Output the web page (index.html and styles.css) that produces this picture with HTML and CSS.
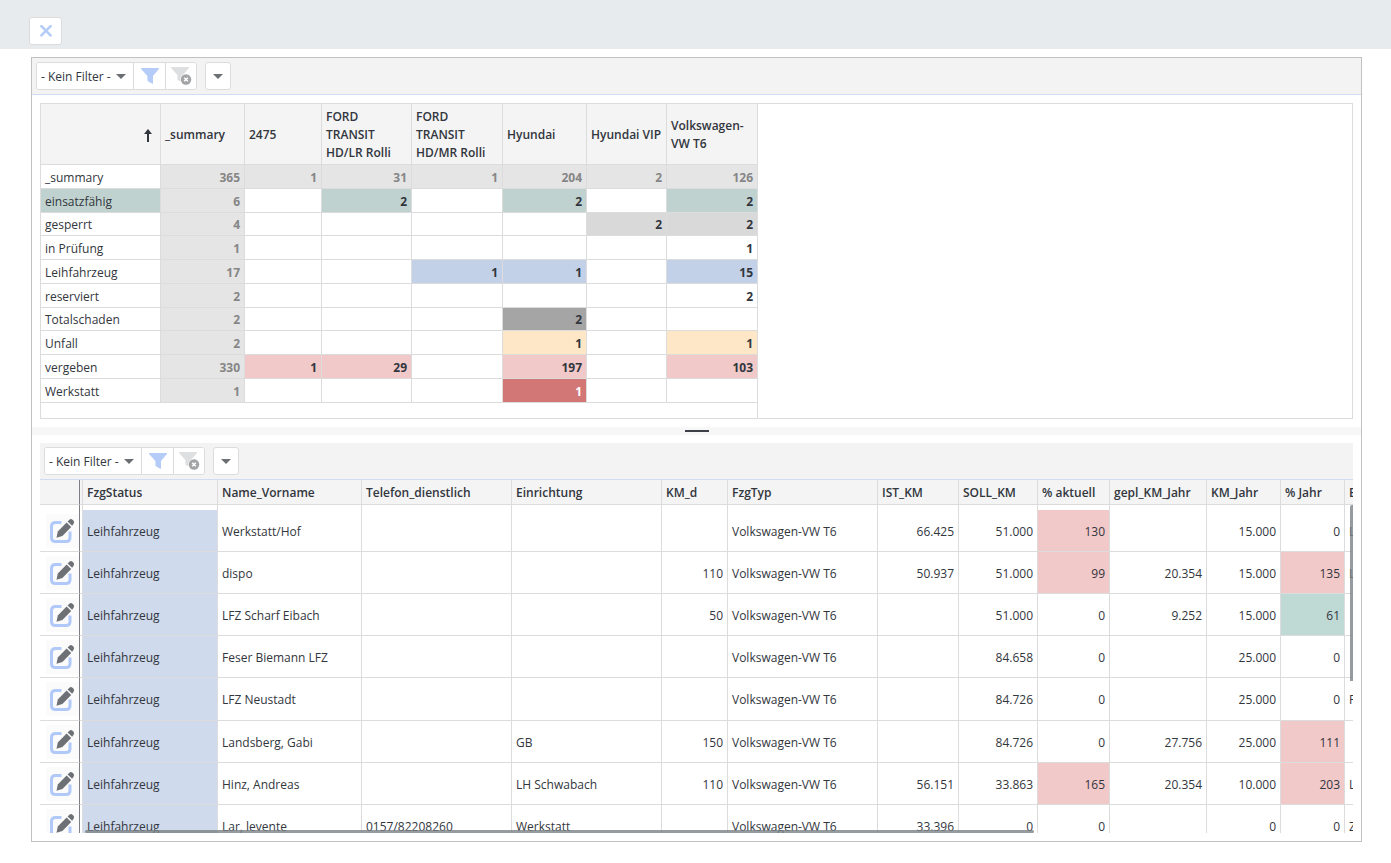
FILE: index.html
```html
<!DOCTYPE html>
<html lang="de">
<head>
  <meta charset="UTF-8">
  <title>Fahrzeuge</title>
  <link rel="stylesheet" href="styles.css">
</head>
<body>

  <!-- Icons -->
  <svg class="sprite" aria-hidden="true">
    <symbol id="icon-close" viewBox="0 0 12 12">
      <path d="M1.4 1.2 L10.6 10.4 M10.6 1.2 L1.4 10.4" fill="none" stroke="#b5ccf8" stroke-width="2.6" stroke-linecap="round"/>
    </symbol>
    <symbol id="icon-caret" viewBox="0 0 10 5">
      <path d="M0 0 H10 L5 5 Z" fill="#6b6e72"/>
    </symbol>
    <symbol id="icon-filter" viewBox="0 0 20 18">
      <path d="M1.6 1 H18.4 Q19.4 1 18.9 2 L13 9 V16.2 Q13 17 12.2 16.7 L8 14.2 Q7.4 13.8 7.4 13 V9 L1.1 2 Q0.6 1 1.6 1 Z" fill="#b5ccf8"/>
    </symbol>
    <symbol id="icon-filter-off" viewBox="0 0 22 20">
      <path d="M1.6 1 H18.4 Q19.4 1 18.9 2 L13 9 V16.2 L8 14.2 Q7.4 13.8 7.4 13 V9 L1.1 2 Q0.6 1 1.6 1 Z" fill="#dedfe0"/>
      <circle cx="16" cy="13.5" r="5.8" fill="#f9f9f9"/>
      <circle cx="16" cy="13.5" r="5.2" fill="#a2a4a6"/>
      <path d="M14.2 11.7 L17.8 15.3 M17.8 11.7 L14.2 15.3" stroke="#fff" stroke-width="1.5"/>
    </symbol>
    <symbol id="icon-edit" viewBox="0 0 26 26">
      <path d="M12.5 4.5 H6.5 Q2.5 4.5 2.5 8.5 V19.5 Q2.5 23.5 6.5 23.5 H17 Q21 23.5 21 19.5 V13.5" fill="none" stroke="#b1c9f8" stroke-width="3"/>
      <path d="M7.5 19.8 L8.8 13.4 L17.6 4.4 L22.2 9 L13.4 17.9 Z" fill="#6d7075"/>
      <path d="M18.6 3.4 L20.4 1.7 Q22 0.4 23.8 2 L24.4 2.6 Q25.8 4.2 24.6 5.8 L23.1 7.7 Z" fill="#6d7075"/>
    </symbol>
    <symbol id="icon-sort" viewBox="0 0 8 13">
      <path d="M4 0 L8 5 H0 Z" fill="#32363d"/>
      <path d="M4 3 V13" stroke="#32363d" stroke-width="2"/>
    </symbol>
  </svg>

  <header class="topbar">
    <button type="button" class="btn btn-close" aria-label="Schließen"><svg><use href="#icon-close"/></svg></button>
  </header>

  <main class="panel">
    <div class="toolbar">
      <div class="btn-group">
        <div class="select-wrap">
          <select aria-label="Filter Übersicht"><option>- Kein Filter -</option></select>
          <svg class="caret"><use href="#icon-caret"/></svg>
        </div>
        <button type="button" class="btn-filter" aria-label="Filtern"><svg class="filter"><use href="#icon-filter"/></svg></button>
        <button type="button" class="btn-filter" aria-label="Filter löschen"><svg class="filter-off"><use href="#icon-filter-off"/></svg></button>
      </div>
      <button type="button" class="btn btn-more" aria-label="Mehr"><svg class="caret"><use href="#icon-caret"/></svg></button>
    </div>

    <section class="pivot">
      <div class="pivot-inner">
        <table class="pivot-table">
          <colgroup>
            <col class="p-status"><col class="p-sum"><col class="p-2475"><col class="p-lr"><col class="p-mr"><col class="p-hy"><col class="p-vip"><col class="p-vw">
          </colgroup>
          <thead>
            <tr>
              <th class="sorted"><svg class="sort"><use href="#icon-sort"/></svg></th>
              <th>_summary</th>
              <th>2475</th>
              <th>FORD TRANSIT HD/LR Rolli</th>
              <th>FORD TRANSIT HD/MR Rolli</th>
              <th>Hyundai</th>
              <th>Hyundai VIP</th>
              <th>Volkswagen-VW T6</th>
            </tr>
          </thead>
          <tbody>
            <tr class="total"><th>_summary</th><td>365</td><td>1</td><td>31</td><td>1</td><td>204</td><td>2</td><td>126</td></tr>
            <tr><th class="green">einsatzfähig</th><td>6</td><td></td><td class="green">2</td><td></td><td class="green">2</td><td></td><td class="green">2</td></tr>
            <tr><th>gesperrt</th><td>4</td><td></td><td></td><td></td><td></td><td class="grey">2</td><td class="grey">2</td></tr>
            <tr><th>in Prüfung</th><td>1</td><td></td><td></td><td></td><td></td><td></td><td>1</td></tr>
            <tr><th>Leihfahrzeug</th><td>17</td><td></td><td></td><td class="blue">1</td><td class="blue">1</td><td></td><td class="blue">15</td></tr>
            <tr><th>reserviert</th><td>2</td><td></td><td></td><td></td><td></td><td></td><td>2</td></tr>
            <tr><th>Totalschaden</th><td>2</td><td></td><td></td><td></td><td class="darkgrey">2</td><td></td><td></td></tr>
            <tr><th>Unfall</th><td>2</td><td></td><td></td><td></td><td class="orange">1</td><td></td><td class="orange">1</td></tr>
            <tr><th>vergeben</th><td>330</td><td class="red">1</td><td class="red">29</td><td></td><td class="red">197</td><td></td><td class="red">103</td></tr>
            <tr><th>Werkstatt</th><td>1</td><td></td><td></td><td></td><td class="darkred">1</td><td></td><td></td></tr>
          </tbody>
        </table>
      </div>
    </section>

    <div class="splitter"><span></span></div>

    <section class="list">
      <div class="toolbar">
        <div class="btn-group">
          <div class="select-wrap">
            <select aria-label="Filter Liste"><option>- Kein Filter -</option></select>
            <svg class="caret"><use href="#icon-caret"/></svg>
          </div>
          <button type="button" class="btn-filter" aria-label="Filtern"><svg class="filter"><use href="#icon-filter"/></svg></button>
          <button type="button" class="btn-filter" aria-label="Filter löschen"><svg class="filter-off"><use href="#icon-filter-off"/></svg></button>
        </div>
        <button type="button" class="btn btn-more" aria-label="Mehr"><svg class="caret"><use href="#icon-caret"/></svg></button>
      </div>

      <div class="list-body">
        <table class="list-table">
          <colgroup>
            <col class="l-edit"><col class="l-gap"><col class="l-status"><col class="l-name"><col class="l-text"><col class="l-text"><col class="l-kmd"><col class="l-text"><col class="l-ist"><col class="l-soll"><col class="l-akt"><col class="l-gepl"><col class="l-kmj"><col class="l-pj"><col class="l-text">
          </colgroup>
          <thead>
            <tr>
              <th></th><th></th><th>FzgStatus</th><th>Name_Vorname</th><th>Telefon_dienstlich</th><th>Einrichtung</th><th>KM_d</th><th>FzgTyp</th><th>IST_KM</th><th>SOLL_KM</th><th>% aktuell</th><th>gepl_KM_Jahr</th><th>KM_Jahr</th><th>% Jahr</th><th>E</th>
            </tr>
          </thead>
          <tbody>
            <tr class="spacer"><td></td><td></td><td></td><td></td><td></td><td></td><td></td><td></td><td></td><td></td><td></td><td></td><td></td><td></td><td></td></tr>
            <tr>
              <td><button type="button" class="btn-edit" aria-label="Bearbeiten"><svg><use href="#icon-edit"/></svg></button></td><td></td>
              <td class="status">Leihfahrzeug</td><td>Werkstatt/Hof</td><td></td><td></td><td class="num"></td><td>Volkswagen-VW T6</td>
              <td class="num">66.425</td><td class="num">51.000</td><td class="num red">130</td><td class="num"></td><td class="num">15.000</td><td class="num">0</td><td>L</td>
            </tr>
            <tr>
              <td><button type="button" class="btn-edit" aria-label="Bearbeiten"><svg><use href="#icon-edit"/></svg></button></td><td></td>
              <td class="status">Leihfahrzeug</td><td>dispo</td><td></td><td></td><td class="num">110</td><td>Volkswagen-VW T6</td>
              <td class="num">50.937</td><td class="num">51.000</td><td class="num red">99</td><td class="num">20.354</td><td class="num">15.000</td><td class="num red">135</td><td>L</td>
            </tr>
            <tr>
              <td><button type="button" class="btn-edit" aria-label="Bearbeiten"><svg><use href="#icon-edit"/></svg></button></td><td></td>
              <td class="status">Leihfahrzeug</td><td>LFZ Scharf Eibach</td><td></td><td></td><td class="num">50</td><td>Volkswagen-VW T6</td>
              <td class="num"></td><td class="num">51.000</td><td class="num">0</td><td class="num">9.252</td><td class="num">15.000</td><td class="num green">61</td><td></td>
            </tr>
            <tr>
              <td><button type="button" class="btn-edit" aria-label="Bearbeiten"><svg><use href="#icon-edit"/></svg></button></td><td></td>
              <td class="status">Leihfahrzeug</td><td>Feser Biemann LFZ</td><td></td><td></td><td class="num"></td><td>Volkswagen-VW T6</td>
              <td class="num"></td><td class="num">84.658</td><td class="num">0</td><td class="num"></td><td class="num">25.000</td><td class="num">0</td><td></td>
            </tr>
            <tr class="tall">
              <td><button type="button" class="btn-edit" aria-label="Bearbeiten"><svg><use href="#icon-edit"/></svg></button></td><td></td>
              <td class="status">Leihfahrzeug</td><td>LFZ Neustadt</td><td></td><td></td><td class="num"></td><td>Volkswagen-VW T6</td>
              <td class="num"></td><td class="num">84.726</td><td class="num">0</td><td class="num"></td><td class="num">25.000</td><td class="num">0</td><td>F</td>
            </tr>
            <tr>
              <td><button type="button" class="btn-edit" aria-label="Bearbeiten"><svg><use href="#icon-edit"/></svg></button></td><td></td>
              <td class="status">Leihfahrzeug</td><td>Landsberg, Gabi</td><td></td><td>GB</td><td class="num">150</td><td>Volkswagen-VW T6</td>
              <td class="num"></td><td class="num">84.726</td><td class="num">0</td><td class="num">27.756</td><td class="num">25.000</td><td class="num red">111</td><td></td>
            </tr>
            <tr>
              <td><button type="button" class="btn-edit" aria-label="Bearbeiten"><svg><use href="#icon-edit"/></svg></button></td><td></td>
              <td class="status">Leihfahrzeug</td><td>Hinz, Andreas</td><td></td><td>LH Schwabach</td><td class="num">110</td><td>Volkswagen-VW T6</td>
              <td class="num">56.151</td><td class="num">33.863</td><td class="num red">165</td><td class="num">20.354</td><td class="num">10.000</td><td class="num red">203</td><td>L</td>
            </tr>
            <tr>
              <td><button type="button" class="btn-edit" aria-label="Bearbeiten"><svg><use href="#icon-edit"/></svg></button></td><td></td>
              <td class="status">Leihfahrzeug</td><td>Lar, levente</td><td>0157/82208260</td><td>Werkstatt</td><td class="num"></td><td>Volkswagen-VW T6</td>
              <td class="num">33.396</td><td class="num">0</td><td class="num">0</td><td class="num"></td><td class="num">0</td><td class="num">0</td><td>Z</td>
            </tr>
          </tbody>
        </table>
        <div class="scroll-v"></div>
        <div class="scroll-h"></div>
      </div>
    </section>
  </main>

</body>
</html>
```
FILE: styles.css
```css
* {
  box-sizing: border-box;
}
body {
  margin: 0;
  height: 100vh;
  display: flex;
  flex-direction: column;
  font-family: "Segoe UI", "Open Sans", sans-serif;
  font-size: 12px;
  line-height: 18px;
  color: #32363d;
  background: #fff;
}
.sprite {
  display: none;
}
svg {
  display: block;
}
button,
select {
  font: inherit;
  color: inherit;
  padding: 0;
  margin: 0;
  border: none;
  background: #fff;
  cursor: pointer;
}

/* top bar */
.topbar {
  height: 49px;
  flex: none;
  padding: 17px 29px 0;
  background: #e7ebee;
}
.btn {
  display: flex;
  align-items: center;
  justify-content: center;
  height: 28px;
  border: 1px solid #dcdcdc;
  border-radius: 3px;
}
.btn-close {
  width: 33px;
}
.btn-close svg {
  width: 12px;
  height: 12px;
}

/* main panel */
.panel {
  flex: 1;
  min-height: 0;
  display: flex;
  flex-direction: column;
  margin: 8px 29px 21px 31px;
  border: 1px solid #c1c1c1;
}
.toolbar {
  flex: none;
  display: flex;
  gap: 8px;
  height: 37px;
  padding: 4px;
  background: #f3f3f3;
  border-bottom: 1px solid #cfdcf3;
}
.btn-group {
  display: flex;
  height: 28px;
  border: 1px solid #dcdcdc;
  border-radius: 3px;
  background: #fff;
  overflow: hidden;
}
.select-wrap {
  position: relative;
  width: 96px;
}
.select-wrap select {
  appearance: none;
  width: 100%;
  height: 100%;
  padding: 2px 0 0 4px;
}
.select-wrap .caret {
  position: absolute;
  right: 7px;
  top: 11px;
  pointer-events: none;
}
.caret {
  width: 10px;
  height: 5px;
}
.btn-filter {
  display: flex;
  align-items: center;
  justify-content: center;
  width: 32px;
  border-left: 1px solid #dcdcdc;
}
.btn-filter:last-child {
  width: 31px;
}
.filter {
  width: 20px;
  height: 18px;
}
.filter-off {
  width: 22px;
  height: 20px;
}
.btn-more {
  width: 26px;
}

/* tables */
table {
  table-layout: fixed;
  border-collapse: separate;
  border-spacing: 0;
}
th,
td {
  padding: 2px 4px 0;
  text-align: left;
  border-right: 1px solid #dcdcdc;
  border-bottom: 1px solid #dcdcdc;
}
thead th {
  font-weight: 600;
  background: #f4f4f4;
}
.green { background: #c0d2cf; }
.grey { background: #d9d9d9; }
.blue { background: #c2d0e8; }
.darkgrey { background: #a5a5a5; }
.orange { background: #fee7c7; }
.red { background: #f1c9c9; }

/* summary table */
.pivot {
  flex: none;
  height: 316px;
  margin: 8px;
  border: 1px solid #dcdcdc;
}
.pivot-inner {
  width: 717px;
  height: 100%;
  border-right: 1px solid #dcdcdc;
}
.pivot-table {
  width: 717px;
}
.p-status { width: 120px; }
.p-sum { width: 84px; }
.p-2475 { width: 77px; }
.p-lr { width: 90px; }
.p-mr { width: 91px; }
.p-hy { width: 84px; }
.p-vip { width: 80px; }
.p-vw { width: 91px; }
.pivot-table thead th {
  height: 61px;
}
.pivot-table tbody tr {
  height: 24px;
}
.pivot-table tbody tr:nth-child(4n+3) {
  height: 23px;
}
.pivot-table tbody th {
  font-weight: normal;
}
.pivot-table td {
  text-align: right;
  font-weight: bold;
}
.pivot-table .total td,
.pivot-table td:nth-child(2) {
  color: #868686;
  background: #e5e5e5;
}
.pivot-table .darkred {
  color: #fff;
  background: #d27776;
}
.sort {
  width: 8px;
  height: 13px;
  margin-left: auto;
  margin-right: 4px;
}

.splitter {
  flex: none;
  display: flex;
  align-items: center;
  justify-content: center;
  height: 8px;
  background: #f7f7f7;
}
.splitter span {
  width: 24px;
  height: 2px;
  background: #3d4047;
}

/* vehicle list */
.list {
  flex: 1;
  min-height: 0;
  display: flex;
  flex-direction: column;
  margin: 8px;
}
.list-body {
  position: relative;
  flex: 1;
  min-height: 0;
  overflow: hidden;
}
.list-table {
  width: 1454px;
}
.l-edit { width: 40px; }
.l-gap { width: 3px; }
.l-status { width: 135px; }
.l-name { width: 144px; }
.l-text { width: 150px; }
.l-kmd { width: 66px; }
.l-ist { width: 81px; }
.l-soll { width: 79px; }
.l-akt { width: 72px; }
.l-gepl { width: 97px; }
.l-kmj { width: 74px; }
.l-pj { width: 64px; }
.list-table thead th {
  height: 25px;
}
.list-table tr > :nth-child(1) {
  padding: 0 0 0 6px;
  border-right-color: #7c7f83;
}
.list-table tr > :nth-child(2) {
  padding: 0;
}
.list-table tbody tr {
  height: 42px;
}
.list-table tbody .tall {
  height: 43px;
}
.list-table tbody .spacer {
  height: 5px;
}
.spacer td {
  border-bottom: none;
}
.list-table .status {
  background: #cfdaec;
}
.list-table .num {
  text-align: right;
}
.list-table .green {
  background: #bfd9d5;
}
.btn-edit {
  display: flex;
  align-items: center;
  width: 33px;
  height: 34px;
  padding-left: 3px;
  background: #fbfbfb;
}
.btn-edit svg {
  width: 26px;
  height: 26px;
}
.scroll-v {
  position: absolute;
  right: 0;
  top: 25px;
  width: 3px;
  height: 176px;
  border-radius: 2px 0 0 0;
  background: rgba(123, 130, 134, 0.8);
}
.scroll-h {
  position: absolute;
  left: 45px;
  bottom: 0;
  width: 949px;
  height: 3px;
  border-radius: 2px;
  background: rgba(123, 130, 134, 0.8);
}
```
